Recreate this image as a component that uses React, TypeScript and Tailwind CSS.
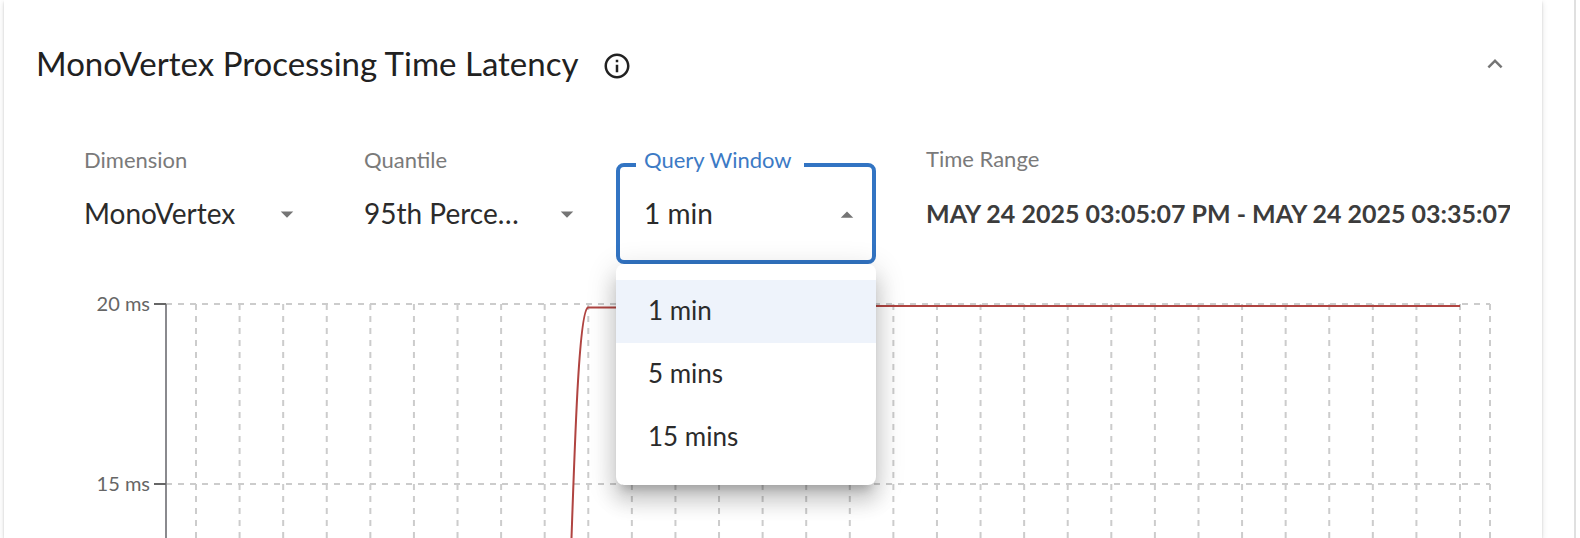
import { useState } from "react";

const arrowDown = "M7 10l5 5 5-5z";
const arrowUp = "M7 15l5-5 5 5z";

function Arrow({ open }: { open?: boolean }) {
  return (
    <svg
      viewBox="0 0 24 24"
      aria-hidden="true"
      className="pointer-events-none absolute right-[14px] top-[51px] size-[30px] fill-[#757575]"
    >
      <path d={open ? arrowUp : arrowDown} />
    </svg>
  );
}

type FieldProps = {
  id: string;
  label: string;
  options: string[];
  value: string;
  open?: boolean;
  onChange: (value: string) => void;
};

function SelectField({ id, label, options, value, open, onChange }: FieldProps) {
  return (
    <div className="relative w-[260px] shrink-0">
      <fieldset
        className={
          open
            ? "h-[116px] rounded-lg border-4 border-[#3274c3] px-4"
            : "h-[116px] rounded-lg border-4 border-transparent px-4"
        }
      >
        <legend
          className={
            open
              ? "h-[34px] pl-2 pr-3 text-[22px] leading-6 text-[#3c7ac5]"
              : "h-[34px] pl-2 pr-3 text-[22px] leading-6 text-[#7a7a7a]"
          }
        >
          <label htmlFor={id}>{label}</label>
        </legend>
        <select
          id={id}
          value={value}
          onChange={(e) => onChange(e.target.value)}
          className="h-[62px] w-full appearance-none overflow-hidden text-ellipsis whitespace-nowrap bg-transparent pl-2 pr-[46px] text-[28px] text-[#2b2b2b] outline-none"
        >
          {options.map((o) => (
            <option key={o}>{o}</option>
          ))}
        </select>
      </fieldset>
      <Arrow open={open} />
      {open && (
        <ul
          role="listbox"
          aria-label={label}
          className="absolute left-0 top-full z-10 w-full rounded-lg bg-white py-4 shadow-[0_10px_10px_-6px_rgba(0,0,0,0.2),0_16px_20px_2px_rgba(0,0,0,0.14),0_6px_28px_4px_rgba(0,0,0,0.12)]"
        >
          {options.map((o) => (
            <li
              key={o}
              role="option"
              aria-selected={o === value}
              onClick={() => onChange(o)}
              className={
                o === value
                  ? "h-[63px] cursor-pointer bg-[#eef3fb] px-8 text-[26px] leading-[60px] text-[#2b2b2b]"
                  : "h-[63px] cursor-pointer px-8 text-[26px] leading-[60px] text-[#2b2b2b]"
              }
            >
              {o}
            </li>
          ))}
        </ul>
      )}
    </div>
  );
}

const columns = Array.from({ length: 30 }, (_, i) => 192 + (i * 1264) / 29);

function LatencyChart() {
  return (
    <svg viewBox="0 0 1538 250" className="block w-full" role="img" aria-label="Processing time latency">
      <g stroke="#cccccc" strokeWidth="2" strokeDasharray="6 6">
        <line x1="162" y1="16" x2="1486" y2="16" />
        <line x1="162" y1="196" x2="1486" y2="196" />
        {columns.map((x) => (
          <line key={x} x1={x} y1="16" x2={x} y2="250" />
        ))}
        <line x1="1486" y1="16" x2="1486" y2="250" />
      </g>
      <line x1="162" y1="16" x2="162" y2="250" stroke="#8a8a8e" strokeWidth="2" />
      <path d="M150 16h12M150 196h12" stroke="#666666" strokeWidth="2" />
      <g fill="#666666" fontSize="20" textAnchor="end">
        <text x="146" y="23">20 ms</text>
        <text x="146" y="203">15 ms</text>
      </g>
      <path
        d="M567.5 250C571 150 575 23 584 19.5H627.6C642 19.5 657 18 671 18H1456"
        fill="none"
        stroke="#b04441"
        strokeWidth="2"
      />
    </svg>
  );
}

export default function App() {
  const [dimension, setDimension] = useState("MonoVertex");
  const [quantile, setQuantile] = useState("95th Percentile");
  const [queryWindow, setQueryWindow] = useState("1 min");
  const [range, setRange] = useState("MAY 24 2025 03:05:07 PM - MAY 24 2025 03:35:07");

  return (
    <div className="min-h-screen overflow-hidden bg-white pr-1 font-[Lato,'Open_Sans',sans-serif]">
      <div className="min-h-screen border-r-2 border-[#e0e0e0] pl-1 pr-8">
        <section className="min-h-screen bg-white shadow-[0_4px_2px_-2px_rgba(0,0,0,0.2),0_2px_2px_0_rgba(0,0,0,0.14),0_2px_6px_0_rgba(0,0,0,0.12)]">
          <header className="flex h-[128px] items-center px-8">
            <h2 className="pb-0.5 text-[33px] leading-10 text-[#212121]">MonoVertex Processing Time Latency</h2>
            <button type="button" aria-label="About this metric" className="ml-6 pt-1">
              <svg viewBox="0 0 24 24" className="size-[30px] fill-[#212121]">
                <path d="M11 7h2v2h-2zm0 4h2v6h-2zm1-9C6.48 2 2 6.48 2 12s4.48 10 10 10 10-4.48 10-10S17.52 2 12 2zm0 18c-4.41 0-8-3.59-8-8s3.59-8 8-8 8 3.59 8 8-3.59 8-8 8z" />
              </svg>
            </button>
            <button type="button" aria-label="Collapse" className="ml-auto">
              <svg viewBox="0 0 24 24" className="size-[30px] fill-[#757575]">
                <path d="M12 8l-6 6 1.41 1.41L12 10.83l4.59 4.58L18 14z" />
              </svg>
            </button>
          </header>
          <div className="flex gap-5 pl-[52px] pr-8 pt-5">
            <SelectField
              id="dimension"
              label="Dimension"
              options={["MonoVertex", "Pod"]}
              value={dimension}
              onChange={setDimension}
            />
            <SelectField
              id="quantile"
              label="Quantile"
              options={["99th Percentile", "95th Percentile", "90th Percentile", "50th Percentile"]}
              value={quantile}
              onChange={setQuantile}
            />
            <SelectField
              id="query-window"
              label="Query Window"
              options={["1 min", "5 mins", "15 mins"]}
              value={queryWindow}
              open
              onChange={setQueryWindow}
            />
            <div className="flex min-w-0 flex-1 flex-col pl-[30px]">
              <label htmlFor="range" className="text-[22px] leading-[22px] text-[#7a7a7a]">
                Time Range
              </label>
              <input
                id="range"
                value={range}
                onChange={(e) => setRange(e.target.value)}
                className="mt-[18px] h-[50px] w-full bg-transparent text-[25px] font-bold text-[#3c3c3c] outline-none"
              />
            </div>
          </div>
          <div className="pt-6">
            <LatencyChart />
          </div>
        </section>
      </div>
    </div>
  );
}
